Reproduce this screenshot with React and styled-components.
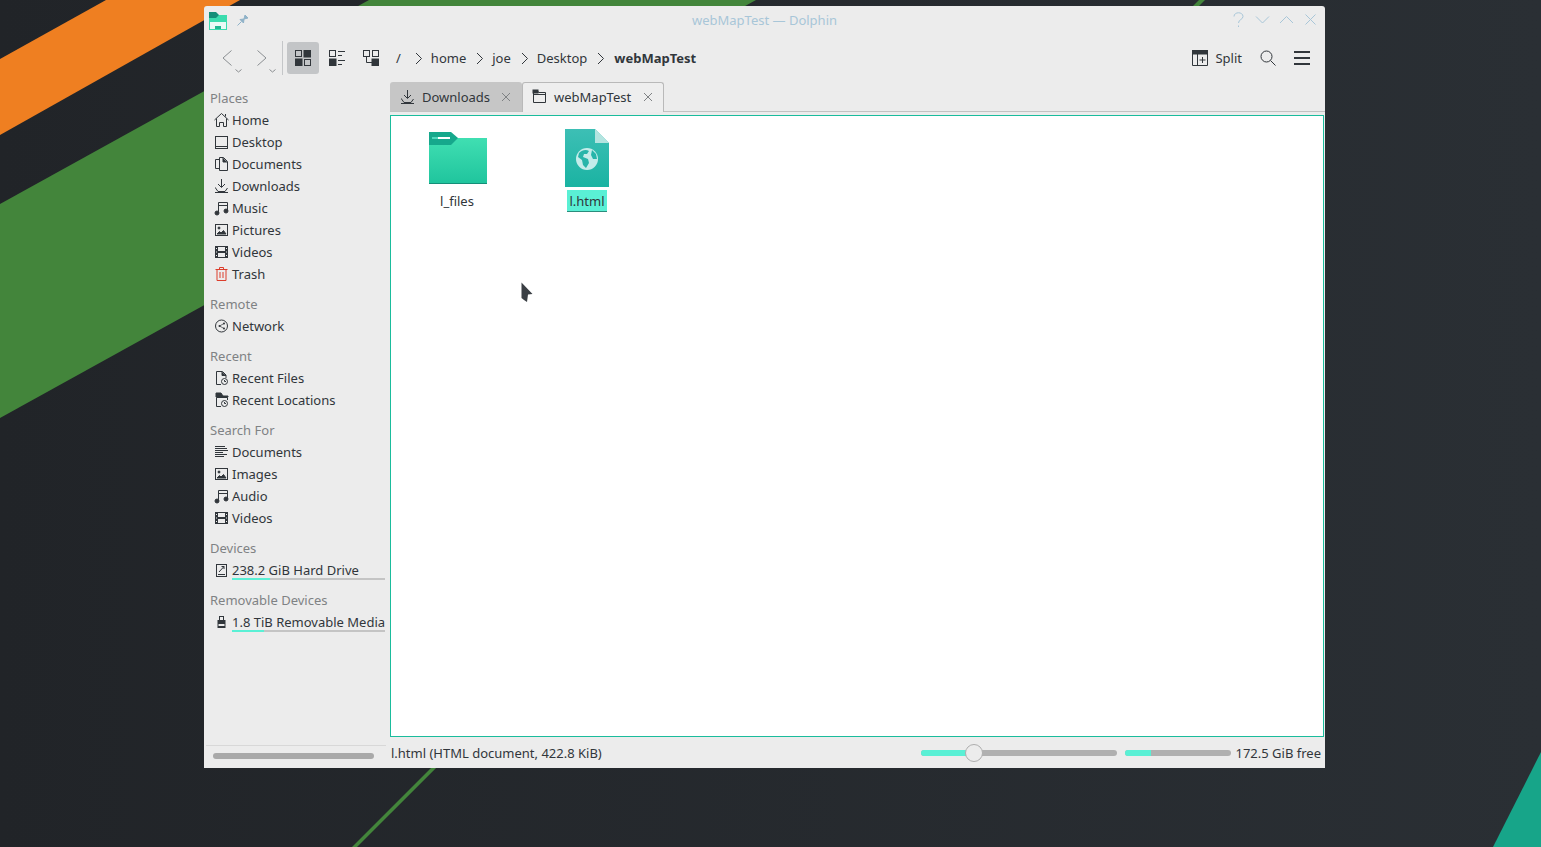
import React from "react"
import styled, { createGlobalStyle } from "styled-components"

const GlobalStyle = createGlobalStyle`
  html, body {
    margin: 0;
    height: 100%;
    overflow: hidden;
    background: #23272b;
  }
  * {
    box-sizing: border-box;
  }
`

const ICONS = {
  back: <path d="M9.5 .5 L1 8 L9.5 15.5" />,
  forward: <path d="M.5 .5 L9 8 L.5 15.5" />,
  drop: <path d="M.5 .5 L3.5 3 L6.5 .5" />,
  crumb: <path d="M1 1 L6.5 6.5 L1 12" />,
  icons: (
    <>
      <rect x=".5" y=".5" width="6" height="6" />
      <rect x="9" y="0" width="7" height="7" fill="currentColor" />
      <rect x="0" y="9" width="7" height="7" fill="currentColor" />
      <rect x="9.5" y="9.5" width="6" height="6" />
    </>
  ),
  compact: (
    <>
      <rect x=".5" y=".5" width="6" height="6" />
      <rect x="0" y="9" width="7" height="7" fill="currentColor" />
      <path d="M9 1.5 H16 M9 5.5 H13 M9 10.5 H16 M9 14.5 H13" />
    </>
  ),
  tree: (
    <>
      <rect x=".5" y=".5" width="6" height="6" />
      <rect x="9.5" y=".5" width="6" height="6" />
      <rect x="9" y="9" width="7" height="7" fill="currentColor" />
      <path d="M3.5 7 V12.5 H9" />
    </>
  ),
  split: (
    <>
      <path d="M.5 3.5 H15.5 V15.5 H.5 Z M5.5 4 V15.5" />
      <rect x="0" y="0" width="16" height="4" fill="currentColor" />
      <path d="M10.5 7 V13 M7.5 10 H13.5" />
    </>
  ),
  search: (
    <>
      <circle cx="6.5" cy="6.5" r="5.5" />
      <path d="M10.5 10.5 L15.5 15.5" />
    </>
  ),
  menu: <path d="M0 2 H16 M0 8 H16 M0 14 H16" strokeWidth="2" />,
  help: <path d="M3 4.5 C3 -0.5 12 -0.5 12 4.5 C12 7.5 7.5 7.5 7.5 11 M7.5 13.5 V15" />,
  min: <path d="M1 4.5 L7.5 11 L14 4.5" />,
  max: <path d="M1 11 L7.5 4.5 L14 11" />,
  close: <path d="M2.5 2.5 L12.5 12.5 M12.5 2.5 L2.5 12.5" />,
  tabClose: <path d="M1 1 L9 9 M9 1 L1 9" />,
  pin: (
    <>
      <path d="M.5 11.5 L4.5 7.5" />
      <path d="M3 5.5 L7 5 L8 1 L11 4 L7 5 L6.5 9 Z" fill="currentColor" />
    </>
  ),
  home: <path d="M.5 8 L7.5 1.5 L14.5 8 M2.5 6.5 V14.5 H5.5 V10.5 H9.5 V14.5 H12.5 V6.5 M11.5 2 V4.5" />,
  desktop: (
    <>
      <rect x="1.5" y="2.5" width="12" height="12" />
      <path d="M1.5 12.5 H13.5" />
    </>
  ),
  documents: (
    <>
      <path d="M5.5 3.5 H1.5 V12.5 H5.5" />
      <path d="M5.5 1.5 H9.5 L13.5 5.5 V14.5 H5.5 Z" />
      <path d="M9 2 V6 H13" fill="currentColor" />
    </>
  ),
  downloads: (
    <>
      <path d="M7.5 1 V9 M4 6 L7.5 9.5 L11 6" />
      <path d="M1.5 9.5 L1.5 10 L4 13.5 H11 L13.5 10" />
      <path d="M1 14.5 H14" />
    </>
  ),
  music: (
    <>
      <path d="M4.5 13 V2.5 H13.5 V11 M4.5 5.5 H13.5" />
      <circle cx="3" cy="13" r="2" fill="currentColor" />
      <circle cx="12" cy="11" r="2" fill="currentColor" />
    </>
  ),
  pictures: (
    <>
      <rect x="1.5" y="2.5" width="12" height="11" />
      <circle cx="5" cy="6" r="1" fill="currentColor" />
      <path d="M3 12 L5.5 9.5 L7 11 L9.5 8.5 L12 12 Z" fill="currentColor" />
    </>
  ),
  videos: (
    <>
      <rect x="1" y="2" width="13" height="12" fill="currentColor" stroke="none" />
      <rect x="4" y="3" width="7" height="4" fill="#ececec" stroke="none" />
      <rect x="4" y="9" width="7" height="4" fill="#ececec" stroke="none" />
      <path d="M2 4.5 H3 M2 8 H3 M2 11.5 H3 M12 4.5 H13 M12 8 H13 M12 11.5 H13" stroke="#ececec" />
    </>
  ),
  trash: <path d="M1.5 3.5 H13.5 M5.5 3.5 V1.5 H9.5 V3.5 M3 3.5 V14.5 H12 V3.5 M6 6 V12 M9 6 V12" />,
  network: (
    <>
      <circle cx="7.5" cy="8" r="6" />
      <path d="M10 5.5 L5.5 8 L10 10.5" strokeWidth=".7" />
      <circle cx="5.5" cy="8" r="1" fill="currentColor" stroke="none" />
      <circle cx="10" cy="5.5" r="1" fill="currentColor" stroke="none" />
      <circle cx="10" cy="10.5" r="1" fill="currentColor" stroke="none" />
    </>
  ),
  recentFile: (
    <>
      <path d="M7 14.5 H2.5 V1.5 H8.5 L12 5 V8" />
      <path d="M8 2 V5.5 H12" fill="currentColor" />
      <circle cx="10.5" cy="11.5" r="3" />
      <path d="M10.5 10 V11.5 H12" />
    </>
  ),
  recentPlace: (
    <>
      <path d="M7 14.5 H2.5 V5.5 H13.5 V8" />
      <path d="M2 1 H7 L9 4 H14 V5 H2 Z" fill="currentColor" />
      <circle cx="10.5" cy="11.5" r="3" />
      <path d="M10.5 10 V11.5 H12" />
    </>
  ),
  lines: <path d="M1 2.5 H11 M1 4.5 H13 M1 6.5 H14 M1 8.5 H9 M1 10.5 H13 M1 12.5 H10" />,
  drive: (
    <>
      <rect x="2.5" y="2.5" width="10" height="12" />
      <path d="M4 12.5 H11 M5 10 L10 4.5 M7.5 4.5 H10 V7" />
    </>
  ),
  usb: (
    <>
      <rect x="5.5" y="2.5" width="4" height="4" />
      <rect x="3.5" y="6" width="8" height="8" fill="currentColor" stroke="none" />
      <rect x="4.5" y="10" width="6" height="2" fill="#ececec" stroke="none" />
    </>
  ),
  tabFolder: (
    <>
      <path d="M1.5 1.5 H5.5 L6.5 3.5 H13.5 V13.5 H1.5 Z" />
      <rect x="1" y="1" width="5" height="3" fill="currentColor" />
      <path d="M1.5 5.5 H13.5" />
    </>
  ),
}

const Svg = styled.svg`
  display: block;
  flex: none;
  fill: none;
  stroke: currentColor;
  stroke-width: 1;
  color: ${(p) => p.$color || "#31363b"};
`

const Icon = ({ name, w = 16, h = 16, box, color }) => (
  <Svg width={w} height={h} viewBox={box || `0 0 ${w} ${h}`} $color={color}>
    {ICONS[name]}
  </Svg>
)

const Page = styled.div`
  position: relative;
  width: 100%;
  height: 100vh;
  padding: 6px 0 0 204px;
  overflow: hidden;
  font-family: "Noto Sans", sans-serif;
  font-size: 13px;
  color: #31363b;
`

const Wallpaper = styled.svg`
  position: absolute;
  inset: 0;
  width: 100%;
  height: 100%;
`

const Window = styled.div`
  position: relative;
  width: 1121px;
  height: 762px;
  display: flex;
  flex-direction: column;
  background: #ececec;
  border-radius: 3px 3px 0 0;
`

const TitleBar = styled.div`
  height: 28px;
  display: flex;
  align-items: center;
  padding: 0 6px 0 5px;
  position: relative;
`

const AppMark = styled.div`
  margin: 2px 10px 0 0;
`

const TitleText = styled.div`
  position: absolute;
  left: 0;
  right: 0;
  top: 5px;
  text-align: center;
  color: #a8c6d8;
  line-height: 18px;
`

const TitleButtons = styled.div`
  margin-left: auto;
  display: flex;
  gap: 9px;
  padding-right: 1px;
`

const Toolbar = styled.div`
  height: 48px;
  display: flex;
  align-items: center;
  padding: 0 15px 0 18px;
`

const NavButton = styled.div`
  width: ${(p) => p.$w}px;
  height: 32px;
  display: flex;
  align-items: flex-start;
  padding-top: 8px;
  gap: 2px;
  color: #8a8e91;
  & > svg:last-child {
    margin-top: 19px;
  }
`

const Divider = styled.div`
  width: 1px;
  height: 34px;
  background: #c4c6c8;
  margin-right: 4px;
`

const ToolButton = styled.div`
  width: 32px;
  height: 32px;
  margin-right: 2px;
  display: flex;
  align-items: center;
  justify-content: center;
  border-radius: 3px;
  background: ${(p) => (p.$active ? "#c3c5c7" : "transparent")};
`

const Breadcrumb = styled.div`
  display: flex;
  align-items: center;
  margin-left: 7px;
  height: 32px;
`

const Crumb = styled.span`
  font-weight: ${(p) => (p.$current ? 700 : 400)};
  line-height: 18px;
  margin-left: ${(p) => (p.$current ? 1 : 0)}px;
`

const RootCrumb = styled.span`
  line-height: 18px;
  margin-right: 4px;
`

const CrumbArrow = styled.span`
  margin: 0 8px 0 10px;
`

const ToolRight = styled.div`
  margin-left: auto;
  display: flex;
  align-items: center;
`

const SplitLabel = styled.span`
  margin: 0 18px 0 7px;
`

const MenuGap = styled.span`
  width: 18px;
`

const Body = styled.div`
  flex: 1;
  display: grid;
  grid-template-columns: 186px 1fr;
  min-height: 0;
`

const Sidebar = styled.div`
  display: flex;
  flex-direction: column;
  padding-top: 5px;
`

const Section = styled.div`
  margin-bottom: 8px;
`

const Heading = styled.div`
  height: 22px;
  line-height: 22px;
  padding-left: 6px;
  color: #7f8284;
`

const Place = styled.div`
  height: 22px;
  display: flex;
  align-items: center;
  padding-left: 10px;
  gap: 3px;
  position: relative;
  white-space: nowrap;
`

const Usage = styled.div`
  position: absolute;
  left: 28px;
  width: 153px;
  bottom: 1px;
  height: 2px;
  background: #c4c4c4;
  &::before {
    content: "";
    display: block;
    height: 100%;
    width: ${(p) => p.$pct}%;
    background: #5af0d5;
  }
`

const SidebarFoot = styled.div`
  margin: auto 4px 0 2px;
  height: 23px;
  border-top: 1px solid #d8d8d8;
  padding: 7px 12px 0 7px;
`

const ScrollThumb = styled.div`
  height: 6px;
  border-radius: 3px;
  background: #a9a9a9;
`

const Main = styled.div`
  display: flex;
  flex-direction: column;
  min-width: 0;
`

const TabRow = styled.div`
  height: 30px;
  display: flex;
  border-bottom: 1px solid #c2c2c2;
`

const Tab = styled.div`
  height: ${(p) => (p.$active ? "30px" : "29px")};
  display: flex;
  align-items: center;
  padding-left: ${(p) => (p.$active ? 9 : 10)}px;
  padding-bottom: ${(p) => (p.$active ? 2 : 0)}px;
  border-radius: 3px 3px 0 0;
  background: ${(p) => (p.$active ? "#eeeeee" : "#c6c6c6")};
  border: ${(p) => (p.$active ? "1px solid #b9b9b9" : "none")};
  border-bottom: none;
  width: ${(p) => p.$w}px;
`

const TabLabel = styled.span`
  margin: 0 ${(p) => (p.$active ? 12 : 11)}px 0 7px;
`

const FileFrame = styled.div`
  margin-top: 3px;
  height: 622px;
  width: 934px;
  background: #fff;
  border: 1px solid #1abc9c;
  padding: 1px;
  display: flex;
  align-items: flex-start;
`

const FileCell = styled.div`
  width: 130px;
  display: flex;
  flex-direction: column;
  align-items: center;
`

const FileThumb = styled.div`
  height: 59px;
  margin-top: 12px;
  padding-top: ${(p) => p.$top}px;
  padding-left: ${(p) => p.$left}px;
`

const FileName = styled.div`
  margin-top: 2px;
  height: 22px;
  line-height: 22px;
  padding: 0 2px;
  background: ${(p) => (p.$selected ? "#5af0d5" : "transparent")};
  border-bottom: ${(p) => (p.$selected ? "1px solid #2c8c7c" : "none")};
`

const StatusBar = styled.div`
  flex: 1;
  display: flex;
  align-items: center;
  padding: 0 4px 0 1px;
`

const StatusText = styled.span`
  margin-right: auto;
`

const Track = styled.div`
  position: relative;
  width: ${(p) => p.$w}px;
  height: 6px;
  border-radius: 3px;
  background: #b0b0b0;
  margin-right: ${(p) => p.$gap}px;
  &::before {
    content: "";
    display: block;
    height: 100%;
    width: ${(p) => p.$fill}px;
    border-radius: 3px 0 0 3px;
    background: #5af0d5;
  }
`

const Handle = styled.div`
  position: absolute;
  left: ${(p) => p.$x}px;
  top: -6px;
  width: 18px;
  height: 18px;
  border-radius: 50%;
  background: #ececec;
  border: 1px solid #aeaeae;
`

const Pointer = styled.svg`
  position: absolute;
  left: 317px;
  top: 276px;
`

const places = [
  {
    title: "Places",
    items: [
      ["home", "Home"],
      ["desktop", "Desktop"],
      ["documents", "Documents"],
      ["downloads", "Downloads"],
      ["music", "Music"],
      ["pictures", "Pictures"],
      ["videos", "Videos"],
      ["trash", "Trash", "#dc3e2c"],
    ],
  },
  { title: "Remote", items: [["network", "Network"]] },
  {
    title: "Recent",
    items: [
      ["recentFile", "Recent Files"],
      ["recentPlace", "Recent Locations"],
    ],
  },
  {
    title: "Search For",
    items: [
      ["lines", "Documents"],
      ["pictures", "Images"],
      ["music", "Audio"],
      ["videos", "Videos"],
    ],
  },
  { title: "Devices", items: [["drive", "238.2 GiB Hard Drive", null, 25]] },
  { title: "Removable Devices", items: [["usb", "1.8 TiB Removable Media", null, 21]] },
]

const crumbs = ["home", "joe", "Desktop"]

const FolderArt = () => (
  <svg width="58" height="52" viewBox="0 0 58 52">
    <defs>
      <linearGradient id="folderBody" x1="0" y1="0" x2="0" y2="1">
        <stop offset="0" stopColor="#40dfb2" />
        <stop offset="1" stopColor="#1fc49d" />
      </linearGradient>
    </defs>
    <path d="M0 6 H58 V52 H0 Z" fill="url(#folderBody)" />
    <path d="M0 0 H22 L29 6 L22 13 H0 Z" fill="#16a88c" />
    <rect x="9" y="5" width="12" height="2" fill="#fff" />
    <rect x="3" y="5" width="6" height="2" fill="#4fd8bd" />
    <rect x="0" y="51" width="58" height="1" fill="#148f78" />
  </svg>
)

const GlobeArt = () => (
  <svg width="44" height="58" viewBox="0 0 44 58">
    <defs>
      <linearGradient id="pageBody" x1="0" y1="0" x2="0" y2="1">
        <stop offset="0" stopColor="#3dbfb5" />
        <stop offset="1" stopColor="#1ab3a2" />
      </linearGradient>
    </defs>
    <path d="M0 0 H30 L44 14 V58 H0 Z" fill="url(#pageBody)" />
    <path d="M30 0 L44 14 H30 Z" fill="#b4e4e0" />
    <circle cx="22" cy="30" r="11" fill="#c4ecea" />
    <path
      d="M14 24 C17 21 21 20 24 22 L22 25 L19 25 L18 28 L23 30 L24 34 L21 39 L18 36 L17 31 L13 28 Z M27 21 L31 25 L32 30 L28 30 L26 26 Z"
      fill="#27b5aa"
    />
  </svg>
)

const AppIcon = () => (
  <svg width="18" height="18" viewBox="0 0 18 18" style={{ display: "block" }}>
    <path d="M0 3 H18 V18 H0 Z" fill="#3bdcae" />
    <path d="M0 0 H7 L10 3 L7 6 H0 Z" fill="#148f78" />
    <rect x="1" y="10" width="16" height="7" fill="#eafaf6" />
    <rect x="6" y="14" width="6" height="3" fill="#22b893" />
  </svg>
)

const App = () => {
  return (
    <Page>
      <GlobalStyle />
      <Wallpaper viewBox="0 0 1541 847">
        <defs>
          <linearGradient id="wall" x1="0" y1="0" x2="1" y2="0">
            <stop offset="0" stopColor="#212428" />
            <stop offset="1" stopColor="#2a2f34" />
          </linearGradient>
        </defs>
        <rect width="1541" height="847" fill="url(#wall)" />
        <polygon points="0,59 106,0 240,0 0,135" fill="#ef7f21" />
        <polygon points="0,204 369,0 756,0 0,418" fill="#43853b" />
        <polygon points="352,847 357,847 1205,0 1199,0" fill="#43853b" />
        <polygon points="1541,752 1493,847 1541,847" fill="#17a589" />
      </Wallpaper>

      <Window>
        <TitleBar>
          <AppMark>
            <AppIcon />
          </AppMark>
          <Icon name="pin" w={12} h={12} color="#8fb2c8" />
          <TitleText>webMapTest — Dolphin</TitleText>
          <TitleButtons>
            <Icon name="help" w={15} h={16} color="#a8c6d8" />
            <Icon name="min" w={15} h={16} color="#a8c6d8" />
            <Icon name="max" w={15} h={16} color="#a8c6d8" />
            <Icon name="close" w={15} h={16} color="#a8c6d8" />
          </TitleButtons>
        </TitleBar>

        <Toolbar>
          <NavButton $w={35}>
            <Icon name="back" w={11} h={16} color="#8a8e91" />
            <Icon name="drop" w={7} h={4} color="#8a8e91" />
          </NavButton>
          <NavButton $w={25}>
            <Icon name="forward" w={10} h={16} color="#8a8e91" />
            <Icon name="drop" w={7} h={4} color="#8a8e91" />
          </NavButton>
          <Divider />
          <ToolButton $active>
            <Icon name="icons" />
          </ToolButton>
          <ToolButton>
            <Icon name="compact" />
          </ToolButton>
          <ToolButton>
            <Icon name="tree" />
          </ToolButton>
          <Breadcrumb>
            <RootCrumb>/</RootCrumb>
            {crumbs.map((c) => (
              <React.Fragment key={c}>
                <CrumbArrow>
                  <Icon name="crumb" w={8} h={13} />
                </CrumbArrow>
                <Crumb>{c}</Crumb>
              </React.Fragment>
            ))}
            <CrumbArrow>
              <Icon name="crumb" w={8} h={13} />
            </CrumbArrow>
            <Crumb $current>webMapTest</Crumb>
          </Breadcrumb>
          <ToolRight>
            <Icon name="split" />
            <SplitLabel>Split</SplitLabel>
            <Icon name="search" />
            <MenuGap />
            <Icon name="menu" />
          </ToolRight>
        </Toolbar>

        <Body>
          <Sidebar>
            {places.map((s) => (
              <Section key={s.title}>
                <Heading>{s.title}</Heading>
                {s.items.map(([icon, label, color, pct]) => (
                  <Place key={label}>
                    <Icon name={icon} w={15} h={16} color={color} />
                    {label}
                    {pct && <Usage $pct={pct} />}
                  </Place>
                ))}
              </Section>
            ))}
            <SidebarFoot>
              <ScrollThumb />
            </SidebarFoot>
          </Sidebar>

          <Main>
            <TabRow>
              <Tab $w={132}>
                <Icon name="downloads" w={15} h={16} />
                <TabLabel>Downloads</TabLabel>
                <Icon name="tabClose" w={10} h={10} color="#7f8284" />
              </Tab>
              <Tab $active $w={142}>
                <Icon name="tabFolder" w={15} h={16} />
                <TabLabel $active>webMapTest</TabLabel>
                <Icon name="tabClose" w={10} h={10} color="#7f8284" />
              </Tab>
            </TabRow>

            <FileFrame>
              <FileCell>
                <FileThumb $top={3} $left={2}>
                  <FolderArt />
                </FileThumb>
                <FileName>l_files</FileName>
              </FileCell>
              <FileCell>
                <FileThumb $top={0} $left={0}>
                  <GlobeArt />
                </FileThumb>
                <FileName $selected>l.html</FileName>
              </FileCell>
            </FileFrame>

            <StatusBar>
              <StatusText>l.html (HTML document, 422.8 KiB)</StatusText>
              <Track $w={196} $fill={54} $gap={8}>
                <Handle $x={44} />
              </Track>
              <Track $w={106} $fill={26} $gap={4} />
              172.5 GiB free
            </StatusBar>
          </Main>
        </Body>

        <Pointer width="12" height="21" viewBox="0 0 12 21">
          <path d="M.5 .5 L11.5 12 L7 12.5 L6 20 L3 18 L.5 16 Z" fill="#3a3f44" />
        </Pointer>
      </Window>
    </Page>
  )
}

export default App
